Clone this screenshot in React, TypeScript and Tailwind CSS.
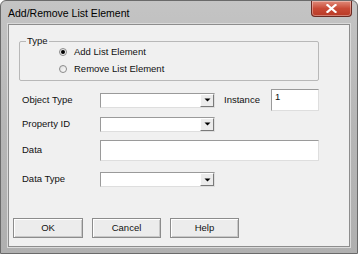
import React from 'react';

const FONT = { fontFamily: '"Liberation Sans", Arial, sans-serif' };

function Combo({ width }: { width: number }) {
  return (
    <div
      className="flex h-[15px] items-stretch border border-t-[#9a9a9a] border-l-[#9a9a9a] border-r-[#dedede] border-b-[#dedede] bg-white"
      style={{ width }}
    >
      <div className="flex-1" />
      <div className="flex w-[14px] items-center justify-center border border-t-white border-l-white border-r-[#7a7a7a] border-b-[#7a7a7a] bg-[#ececec]">
        <svg width="7" height="4" viewBox="0 0 7 4">
          <path d="M0.5 0.5h6L3.5 3.5z" fill="#000" />
        </svg>
      </div>
    </div>
  );
}

function Radio({ checked, label }: { checked?: boolean; label: string }) {
  return (
    <div className="flex h-[12px] items-center">
      <div className="flex h-[8px] w-[8px] items-center justify-center rounded-full border border-[#8a8a8a] bg-gradient-to-br from-[#dcdcdc] to-white">
        {checked && <div className="h-[4px] w-[4px] rounded-full bg-black" />}
      </div>
      <span className="ml-[7px] text-[9.5px] leading-[12px] text-[#111]">{label}</span>
    </div>
  );
}

function Button({ label, width }: { label: string; width: number }) {
  return (
    <button
      className="flex h-[20px] items-center justify-center border border-[#8c8c8c] bg-[#ececec] text-[9.5px] text-[#111] shadow-[inset_1px_1px_0_#ffffff,inset_-1px_-1px_0_#c8c8c8]"
      style={{ width }}
    >
      {label}
    </button>
  );
}

export default function App() {
  return (
    <div
      className="flex h-[254px] w-[358px] flex-col overflow-hidden rounded-t-[6px] border border-[#6a6a6a] bg-gradient-to-b from-[#c4c4c4] via-[#b6b6b6] to-[#b0b0b0] px-[7px] pb-[6px]"
      style={FONT}
    >
      {/* Title bar */}
      <div className="flex h-[23px] items-start justify-between">
        <span className="mt-[6px] text-[10.5px] leading-[13px] text-black">Add/Remove List Element</span>
        <div className="-mr-[2px] flex h-[16px] w-[41px] items-center justify-center rounded-b-[4px] border border-t-0 border-[#6b2a22] bg-gradient-to-b from-[#e08a7a] via-[#c94a36] to-[#b83a26] shadow-[inset_0_0_0_1px_rgba(255,255,255,0.35)]">
          <svg width="11" height="9" viewBox="0 0 11 9">
            <path d="M1.5 1l8 7M9.5 1l-8 7" stroke="#ffffff" strokeWidth="2.2" strokeLinecap="square" />
          </svg>
        </div>
      </div>

      {/* Client area */}
      <div className="flex flex-1 flex-col border border-[#8d8d8d] bg-[#f0f0f0] shadow-[0_0_0_1px_#dadada]">
        <fieldset className="ml-[10px] mt-[11px] h-[45px] w-[300px] rounded-[2px] border border-[#b8b8b8]">
          <legend className="ml-[6px] px-[1px] text-[9.5px] leading-[10px] text-[#111]">Type</legend>
          <div className="flex flex-col gap-[5px] pl-[39px]">
            <Radio checked label="Add List Element" />
            <Radio label="Remove List Element" />
          </div>
        </fieldset>

        <div className="mt-[8px] flex h-[22px] items-center pl-[13px] text-[9.5px] text-[#111]">
          <span className="w-[78px]">Object Type</span>
          <Combo width={115} />
          <span className="ml-[9px] w-[47px]">Instance</span>
          <div className="h-[22px] w-[48px] border border-t-[#9a9a9a] border-l-[#9a9a9a] border-r-[#dedede] border-b-[#dedede] bg-white pl-[3px] pt-[1px] leading-[12px]">
            1
          </div>
        </div>

        <div className="mt-[6px] flex h-[14px] items-center pl-[13px] text-[9.5px] text-[#111]">
          <span className="w-[78px]">Property ID</span>
          <Combo width={115} />
        </div>

        <div className="mt-[9px] flex h-[21px] items-center pl-[13px] text-[9.5px] text-[#111]">
          <span className="w-[78px]">Data</span>
          <div className="h-[21px] w-[219px] border border-t-[#9a9a9a] border-l-[#9a9a9a] border-r-[#dedede] border-b-[#dedede] bg-white" />
        </div>

        <div className="mt-[11px] flex h-[15px] items-center pl-[13px] text-[9.5px] text-[#111]">
          <span className="w-[78px]">Data Type</span>
          <Combo width={115} />
        </div>

        <div className="mt-[31px] flex gap-[9px] pl-[4px]">
          <Button label="OK" width={70} />
          <Button label="Cancel" width={69} />
          <Button label="Help" width={69} />
        </div>
      </div>
    </div>
  );
}
